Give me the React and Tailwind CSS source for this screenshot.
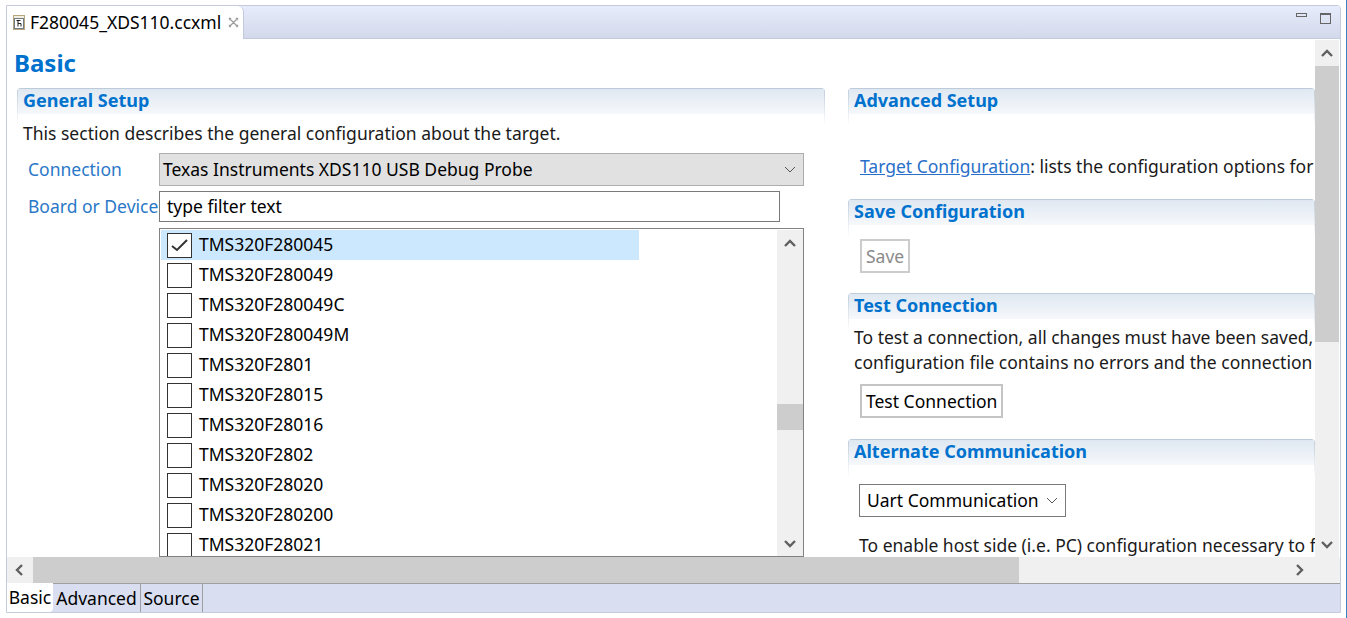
import React from "react";

const FONT = "font-['Noto_Sans',sans-serif]";

const devices = [
  "TMS320F280045",
  "TMS320F280049",
  "TMS320F280049C",
  "TMS320F280049M",
  "TMS320F2801",
  "TMS320F28015",
  "TMS320F28016",
  "TMS320F2802",
  "TMS320F28020",
  "TMS320F280200",
  "TMS320F28021",
];

const Chevron = ({ dir, className = "" }) => {
  const points = {
    up: "2,10 7,5 12,10",
    down: "2,5 7,10 12,5",
    left: "9,2 4,7 9,12",
    right: "5,2 10,7 5,12",
  };
  return (
    <svg width="14" height="14" viewBox="0 0 14 14" className={className}>
      <polyline points={points[dir]} fill="none" stroke="#606060" strokeWidth="2.4" />
    </svg>
  );
};

const ComboArrow = () => (
  <svg width="12" height="8" viewBox="0 0 12 8">
    <polyline points="1,1 6,6 11,1" fill="none" stroke="#555" strokeWidth="1" />
  </svg>
);

const Section = ({ title, className = "", children }) => (
  <div className={`rounded-t-[4px] bg-[linear-gradient(to_bottom,#bccbda,#ffffff_38px)] px-px pt-px ${className}`}>
    <div className="rounded-t-[3px] bg-white">
      <div className="h-[25px] bg-gradient-to-b from-[#dfe8f1] to-[#f6f8fb] pl-[5px] text-[18px] font-bold leading-[32px] text-[#0072ce]">
        <span className="relative -top-[5px]">{title}</span>
      </div>
      {children}
    </div>
  </div>
);

const DeviceRow = ({ name, checked }) => (
  <div className="relative flex h-[30px] shrink-0 items-center pl-[7px]">
    {checked && <div className="absolute left-px top-0 h-[30px] w-[478px] bg-[#cce8ff]" />}
    <div className="relative flex h-[25px] w-[25px] shrink-0 items-center justify-center border border-[#333] bg-white">
      {checked && (
        <svg width="19" height="15" viewBox="0 0 19 15">
          <polyline points="2,8 7,12 17,2" fill="none" stroke="#333" strokeWidth="2" />
        </svg>
      )}
    </div>
    <span className="relative ml-[7px] text-[17.5px] leading-none text-black">{name}</span>
  </div>
);

const PushButton = ({ children, disabled }) => (
  <div
    className={`inline-flex h-[34px] items-center border-2 px-[4px] ${
      disabled ? "border-[#cccccc] text-[#8a8a8a]" : "border-[#c4c4c4] text-black"
    }`}
  >
    {children}
  </div>
);

export default function App() {
  return (
    <div className={`${FONT} flex h-[618px] w-[1347px] flex-col overflow-hidden border-r border-[#3a87c8] bg-white pb-[5px] pl-[6px] pr-[5px] pt-[5px] text-[17.5px] text-[#1a1a1a]`}>
      <div className="flex min-h-0 flex-1 flex-col overflow-hidden rounded-tr-[4px] border border-[#c5cbdd]">
        {/* editor tab bar */}
        <div className="flex h-[33px] shrink-0 border-b border-[#c2cade] bg-gradient-to-b from-[#e7ecfc] to-[#d2d9ea]">
          <div className="-mb-px flex h-[33px] w-[237px] items-center rounded-tr-[6px] border-r border-[#c5cbdd] bg-white pl-[6px]">
            <svg width="12" height="15" viewBox="0 0 12 15" className="shrink-0">
              <rect x="0.5" y="0.5" width="11" height="14" fill="#f3efe0" stroke="#b7a77f" />
              <rect x="1.5" y="3.5" width="9" height="10" fill="#fff" stroke="#6f7a85" />
              <path d="M3.5 5.5h4M5 5.5v6M5 8.5h3v3" fill="none" stroke="#222" />
            </svg>
            <span className="ml-[5px] whitespace-nowrap text-[17.5px] text-black">F280045_XDS110.ccxml</span>
            <svg width="11" height="11" viewBox="0 0 11 11" className="ml-[7px] shrink-0">
              <path d="M1 1l9 9M10 1l-9 9M1 3l2-2M8 1l2 2M1 8l2 2M8 10l2-2" fill="none" stroke="#9a9a9a" strokeWidth="1.2" />
            </svg>
          </div>
          <div className="ml-auto flex items-start gap-[13px] pr-[9px] pt-[7px]">
            <div className="h-[4px] w-[11px] border border-[#666]" />
            <div className="h-[11px] w-[11px] border border-[#666] border-t-2" />
          </div>
        </div>

        {/* editor body */}
        <div className="flex min-h-0 flex-1">
          <div className="min-w-0 flex-1 overflow-hidden bg-white">
            <div className="pl-[7px] pt-[8px] text-[24px] font-bold leading-[32px] text-[#0072ce]">Basic</div>
            <div className="mt-[9px] flex items-start pl-[10px]">
              {/* left column */}
              <Section title="General Setup" className="w-[808px] shrink-0">
                <div className="whitespace-nowrap pl-[5px] pt-[6px] leading-[26px]">
                  This section describes the general configuration about the target.
                </div>
                <div className="mt-[7px] flex items-center">
                  <div className="w-[141px] pl-[10px] text-[#2a78c8]">Connection</div>
                  <div className="flex h-[33px] w-[645px] items-center justify-between border border-[#adadad] bg-[#e1e1e1] pl-[3px] pr-[7px] text-black">
                    <span>Texas Instruments XDS110 USB Debug Probe</span>
                    <ComboArrow />
                  </div>
                </div>
                <div className="mt-[5px] flex items-center">
                  <div className="w-[141px] pl-[10px] text-[#2a78c8]">Board or Device</div>
                  <div className="flex h-[31px] w-[621px] items-center border border-[#7a7a7a] pl-[7px] text-black">
                    type filter text
                  </div>
                </div>
                <div className="ml-[141px] mt-[6px] flex h-[329px] w-[645px] border border-[#828282] pt-px">
                  <div className="flex min-w-0 flex-1 flex-col overflow-hidden">
                    {devices.map((name, i) => (
                      <DeviceRow key={name} name={name} checked={i === 0} />
                    ))}
                  </div>
                  <div className="flex w-[26px] shrink-0 flex-col items-center bg-[#f0f0f0]">
                    <div className="flex h-[26px] w-full items-center justify-center">
                      <Chevron dir="up" />
                    </div>
                    <div className="mt-[148px] h-[26px] w-full bg-[#cdcdcd]" />
                    <div className="mt-auto flex h-[26px] w-full items-center justify-center">
                      <Chevron dir="down" />
                    </div>
                  </div>
                </div>
              </Section>

              {/* right column */}
              <div className="ml-[23px] flex w-[467px] shrink-0 flex-col overflow-hidden whitespace-nowrap">
                <Section title="Advanced Setup">
                  <div className="pl-[11px] pt-[39px] leading-[26px]">
                    <span className="text-[#2a6fc9] underline">Target Configuration</span>: lists the configuration options for the target.
                  </div>
                </Section>
                <Section title="Save Configuration" className="mt-[20px]">
                  <div className="pl-[11px] pt-[14px]">
                    <PushButton disabled>Save</PushButton>
                  </div>
                </Section>
                <Section title="Test Connection" className="mt-[20px]">
                  <div className="pl-[5px] pt-[6px] leading-[25px]">
                    To test a connection, all changes must have been saved, the
                    <br />
                    configuration file contains no errors and the connection type
                  </div>
                  <div className="pl-[11px] pt-[9px]">
                    <PushButton>Test Connection</PushButton>
                  </div>
                </Section>
                <Section title="Alternate Communication" className="mt-[21px]">
                  <div className="pl-[10px] pt-[19px]">
                    <div className="flex h-[33px] w-[207px] items-center justify-between border border-[#7a7a7a] pl-[7px] pr-[7px] text-black">
                      <span>Uart Communication</span>
                      <ComboArrow />
                    </div>
                  </div>
                  <div className="pl-[10px] pt-[15px] leading-[26px]">
                    To enable host side (i.e. PC) configuration necessary to facilitate
                  </div>
                </Section>
              </div>
            </div>
          </div>

          {/* vertical scrollbar */}
          <div className="flex w-[24px] shrink-0 flex-col bg-[#f0f0f0] mr-px mt-px">
            <div className="flex h-[26px] items-center justify-center">
              <Chevron dir="up" />
            </div>
            <div className="h-[276px] bg-[#cdcdcd]" />
            <div className="mt-auto flex h-[26px] items-center justify-center">
              <Chevron dir="down" />
            </div>
          </div>
        </div>

        {/* horizontal scrollbar */}
        <div className="flex h-[26px] shrink-0 bg-[#f0f0f0]">
          <div className="flex w-[26px] items-center justify-center">
            <Chevron dir="left" />
          </div>
          <div className="w-[986px] bg-[#cdcdcd]" />
          <div className="ml-auto flex w-[80px] items-center justify-start pl-[32px]">
            <Chevron dir="right" />
          </div>
        </div>

        {/* page tabs */}
        <div className="flex h-[29px] shrink-0 border-t border-[#a0a0a0] bg-[#d9dff0] text-[17.5px] text-black">
          <div className="-mt-px flex w-[46px] items-center justify-center rounded-br-[4px] bg-white">Basic</div>
          <div className="flex w-[88px] items-center justify-center border-r border-[#a0a0a0]">Advanced</div>
          <div className="flex w-[62px] items-center justify-center border-r border-[#a0a0a0]">Source</div>
        </div>
      </div>
    </div>
  );
}
